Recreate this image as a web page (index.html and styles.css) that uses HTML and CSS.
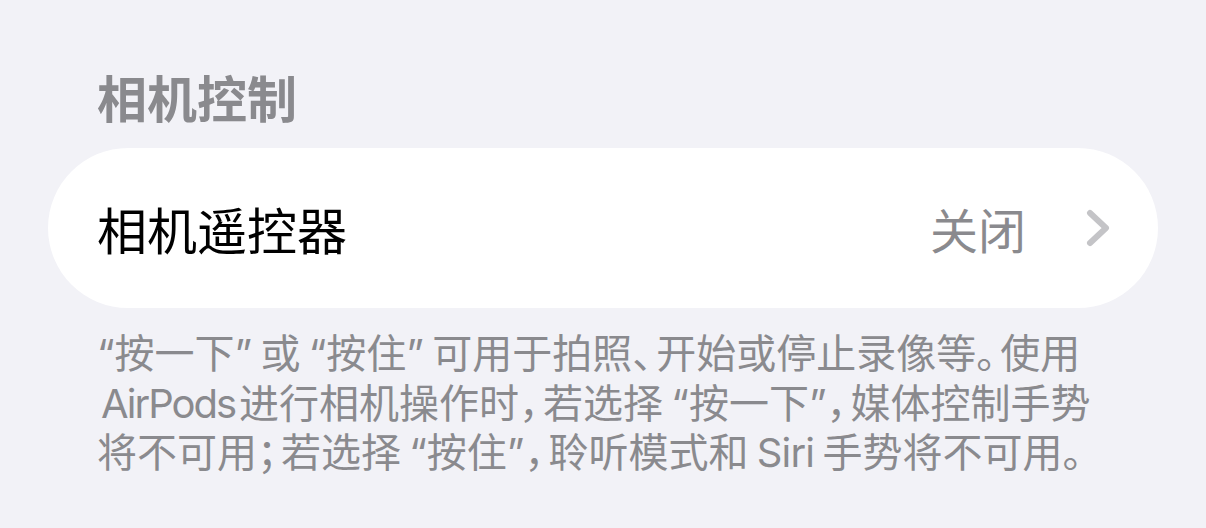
FILE: index.html
```html
<!DOCTYPE html>
<html lang="zh-CN">
<head>
    <meta charset="UTF-8">
    <title>相机控制</title>
    <link rel="stylesheet" href="styles.css">
</head>
<body>
<div class="settingsPage">
    <h1 class="groupTitle">相机控制</h1>
    <div class="groupCard">
        <div class="cellRow">
            <span class="cellLabel">相机遥控器</span>
            <span class="cellValue">关闭</span>
            <svg class="cellArrow" width="24" height="40" viewBox="0 0 24 40">
                <polyline points="4,5 20,20 4,35" fill="none" stroke="#c4c4c7" stroke-width="6" stroke-linecap="round" stroke-linejoin="round"/>
            </svg>
        </div>
    </div>
    <p class="groupFooter">“按一下” 或 “按住” 可用于拍照<span class="punct">、</span>开始或停止录像等<span class="punct">。</span>使用<br><span class="latinWord">AirPods</span>进行相机操作时<span class="punct">，</span>若选择 “按一下”<span class="punct">，</span>媒体控制手势<br>将不可用<span class="punct">；</span>若选择 “按住”<span class="punct">，</span>聆听模式和 <span class="latinName">Siri</span> 手势将不可用<span class="punct">。</span></p>
</div>
</body>
</html>
```

FILE: styles.css
```css
body,html,h1,p{
    padding: 0;
    margin: 0;
}
body,html{
    width: 100%;
    height: 100%;
    background: #f2f2f7;
    font-family: Inter, "Noto Sans CJK SC", sans-serif;
}
.settingsPage{
    padding: 67px 48px 0;
}
.groupTitle{
    padding-left: 49px;
    font-family: "Noto Sans CJK SC", sans-serif;
    font-size: 50px;
    font-weight: 700;
    line-height: 58px;
    color: #8a8a8e;
}
.groupCard{
    margin-top: 23px;
    background: #fff;
    border-radius: 80px;
}
.cellRow{
    display: flex;
    align-items: center;
    height: 160px;
    padding: 0 48px 0 49px;
}
.cellLabel{
    flex: 1;
    font-family: "Noto Sans CJK SC", sans-serif;
    font-size: 50px;
    color: #000;
}
.cellValue{
    font-family: "Noto Sans CJK SC", sans-serif;
    font-size: 48px;
    color: #8a8a8e;
}
.cellArrow{
    display: block;
    margin-left: 60px;
}
.groupFooter{
    margin-top: 21px;
    padding-left: 49px;
    font-size: 40px;
    line-height: 49.5px;
    color: #8a8a8e;
    white-space: nowrap;
    word-spacing: -3px;
}
/* 标点挤压，字形留在左侧 */
.punct{
    letter-spacing: -16px;
}
.latinWord{
    margin: 0 4px 0 4px;
    letter-spacing: -2px;
}
.latinName{
    letter-spacing: -0.8px;
}
```
